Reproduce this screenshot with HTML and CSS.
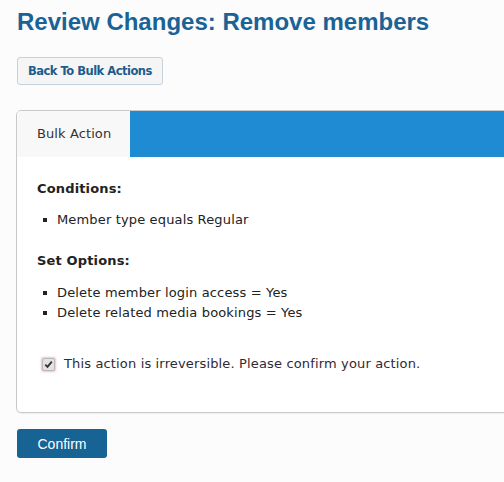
FILE: index.html
```html
<!DOCTYPE html>
<html>
<head>
<meta charset="utf-8">
<link rel="stylesheet" href="styles.css">
</head>
<body>
<div class="page">
  <h1 class="title">Review Changes: Remove members</h1>
  <button class="btn-back">Back To Bulk Actions</button>
  <div class="panel">
    <div class="tabs">
      <div class="tab">Bulk Action</div>
      <div class="tab-fill"></div>
    </div>
    <div class="panel-body">
      <div class="heading">Conditions:</div>
      <ul class="list">
        <li>Member type equals Regular</li>
      </ul>
      <div class="heading heading-2">Set Options:</div>
      <ul class="list">
        <li>Delete member login access = Yes</li>
        <li>Delete related media bookings = Yes</li>
      </ul>
      <label class="confirm-row">
        <span class="check"><svg width="9" height="9" viewBox="0 0 9 9"><path d="M1.3 4.6 L3.5 6.9 L7.8 1.6" fill="none" stroke="#333" stroke-width="1.8"/></svg></span>
        <span>This action is irreversible. Please confirm your action.</span>
      </label>
    </div>
  </div>
  <button class="btn-confirm">Confirm</button>
</div>
</body>
</html>
```
FILE: styles.css
```css
html, body {
  margin: 0;
  padding: 0;
  overflow: hidden;
  background: #fcfcfc;
}
.page {
  padding: 8px 0 0 17px;
  font-family: "DejaVu Sans", Verdana, sans-serif;
  font-size: 13px;
  color: #222;
}
.title {
  margin: 0;
  font-family: "Liberation Sans", Arial, sans-serif;
  font-size: 24px;
  line-height: 28px;
  font-weight: bold;
  color: #1b6396;
}
.btn-back {
  display: block;
  margin-top: 21px;
  height: 28px;
  padding: 0 10px;
  border: 1px solid #c5d2de;
  border-radius: 3px;
  background: #f5f5f5;
  font-family: "DejaVu Sans", Verdana, sans-serif;
  font-size: 11.5px;
  font-weight: bold;
  color: #1d5c8c;
  letter-spacing: -0.5px;
}
.panel {
  margin-top: 25px;
  margin-left: -1px;
  width: 560px;
  border: 1px solid #c9c9c9;
  border-radius: 5px;
  background: #fff;
  overflow: hidden;
  box-shadow: 0 1px 1px rgba(0,0,0,0.06);
}
.tabs {
  display: flex;
  height: 46px;
}
.tab {
  width: 113px;
  padding-left: 20px;
  box-sizing: border-box;
  background: #f8f8f8;
  line-height: 46px;
  color: #333;
  letter-spacing: 0.1px;
}
.tab-fill {
  flex: 1;
  background: #1f8bd3;
}
.panel-body {
  padding: 22px 20px 38px 20px;
  line-height: 20px;
  letter-spacing: 0.15px;
}
.heading {
  font-weight: bold;
}
.heading-2 {
  margin-top: 21px;
}
.list {
  list-style: none;
  margin: 11px 0 0 0;
  padding: 0;
}
.list li::before {
  content: "";
  display: inline-block;
  width: 4px;
  height: 4px;
  background: #222;
  margin: 0 10px 2px 6px;
  vertical-align: middle;
}
.list + .heading {
  margin-top: 21px;
}
.heading-2 + .list {
  margin-top: 12px;
}
.confirm-row {
  display: flex;
  align-items: center;
  margin-top: 31px;
  padding-left: 5px;
  color: #2f2a33;
}
.check {
  display: inline-flex;
  align-items: center;
  justify-content: center;
  width: 11px;
  height: 11px;
  border: 1px solid #b9b9b9;
  border-radius: 2px;
  background: #e2e2e2;
  box-shadow: 0 0 2px 1px rgba(230,140,150,0.55);
  margin-right: 9px;
}
.btn-confirm {
  display: block;
  margin-top: 16px;
  height: 29px;
  width: 90px;
  padding: 0;
  border: 0;
  border-radius: 3px;
  background: #166394;
  color: #fff;
  font-family: "Liberation Sans", Arial, sans-serif;
  font-size: 14px;
}
```
